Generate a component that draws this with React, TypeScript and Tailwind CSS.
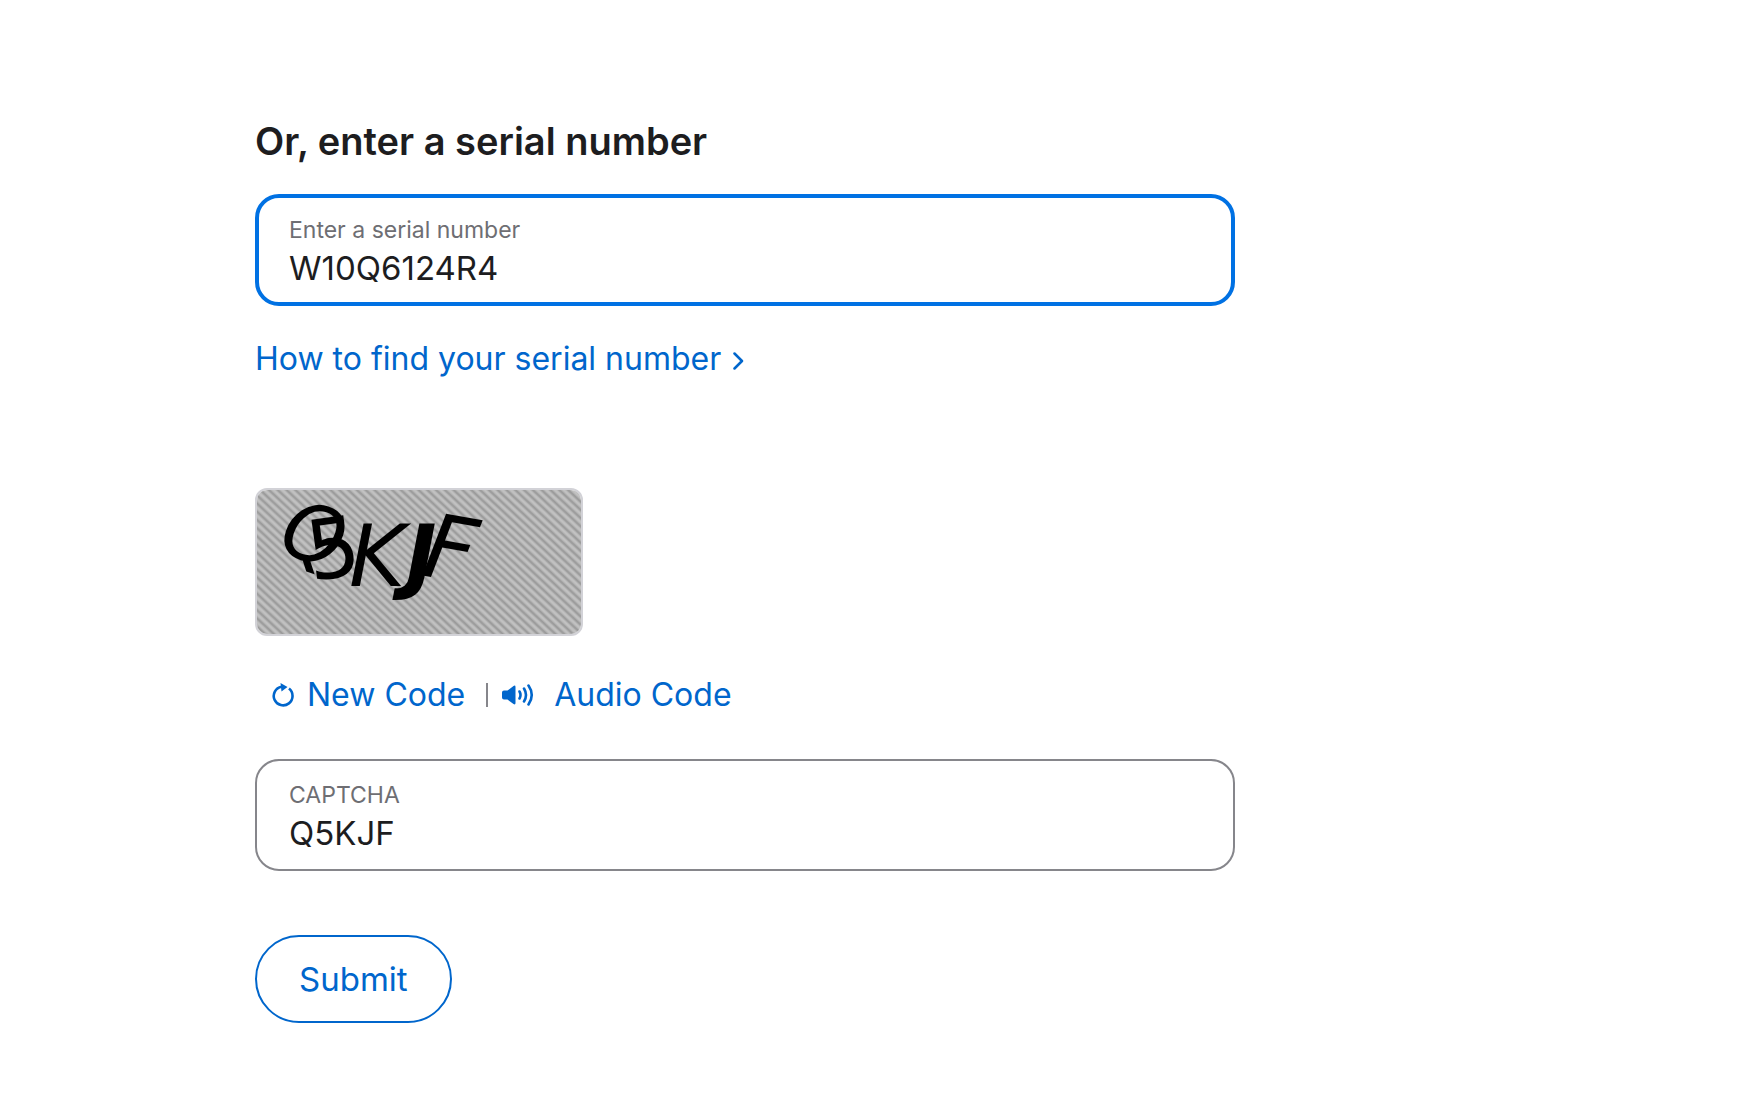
import React from "react";

function Field({ id, label, value, focused }: { id: string; label: string; value: string; focused?: boolean }) {
  return (
    <div
      className={
        focused
          ? "h-28 rounded-3xl border-4 border-[#0071e3] px-[30px] pt-4"
          : "h-28 rounded-3xl border-2 border-[#86868b] px-8 pt-[18px]"
      }
    >
      <label htmlFor={id} className="block text-[23px] leading-8 text-[#6e6e73]">
        {label}
      </label>
      <input
        id={id}
        type="text"
        defaultValue={value}
        className="block w-full bg-transparent text-[33px] leading-[44px] text-[#1d1d1f] outline-none"
      />
    </div>
  );
}

function CaptchaImage() {
  return (
    <svg viewBox="0 0 324 144" className="block h-full w-full" role="img" aria-label="Captcha code">
      <defs>
        <linearGradient id="stripe" x1="0" y1="0" x2="0" y2="1">
          <stop offset="0" stopColor="#c4c4c4" />
          <stop offset="0.3" stopColor="#bebebe" />
          <stop offset="0.65" stopColor="#929292" />
          <stop offset="1" stopColor="#c4c4c4" />
        </linearGradient>
        <pattern id="stripes" width="8" height="6" patternUnits="userSpaceOnUse" patternTransform="rotate(43)">
          <rect width="8" height="6" fill="url(#stripe)" />
        </pattern>
      </defs>
      <rect width="324" height="144" fill="url(#stripes)" />
      <g fontFamily="'DejaVu Sans', sans-serif" fill="#000">
        <text fontSize="79" fontStyle="italic" transform="translate(19 61) rotate(18)">Q</text>
        <text fontSize="83" transform="translate(54 91) rotate(-8)">5</text>
        <text fontSize="86" fontStyle="italic" transform="translate(92 96)">K</text>
        <text fontSize="82" fontWeight="700" fontStyle="italic" transform="translate(149 94)">J</text>
        <text fontSize="89" fontStyle="italic" transform="translate(163 85) rotate(10)">F</text>
      </g>
    </svg>
  );
}

function RefreshIcon() {
  return (
    <svg width="22" height="24" viewBox="0 0 22 24" fill="none" aria-hidden="true">
      <path d="M17 5.600A9.400 9.400 0 1 1 9.500 3.700" stroke="currentColor" strokeWidth="2.600" />
      <path d="M8.500 0 15.500 4 9.500 8.500Z" fill="currentColor" />
    </svg>
  );
}

function SpeakerIcon() {
  return (
    <svg width="32" height="24" viewBox="0 0 32 24" fill="none" aria-hidden="true">
      <path
        d="M2 7.500H5.500L11.500 3Q13.500 1.800 13.500 4V20Q13.500 22.200 11.500 21L5.500 16.500H2Q0 16.500 0 14.500V9.500Q0 7.500 2 7.500Z"
        fill="currentColor"
      />
      <path
        d="M17.500 8.500Q19.500 12 17.500 15.500M22 5.500Q26 12 22 18.500M26.500 2.500Q33 12 26.500 21.500"
        stroke="currentColor"
        strokeWidth="2.600"
        strokeLinecap="round"
      />
    </svg>
  );
}

export default function App() {
  return (
    <main
      className="min-h-screen bg-white px-[255px] pt-[116px] pb-[87px] text-[32px] leading-[50px] text-[#0066cc]"
      style={{ fontFamily: "Inter, sans-serif" }}
    >
      <form className="max-w-[980px]" onSubmit={(e) => e.preventDefault()}>
        <h2 className="mb-7 text-[38px] font-semibold text-[#1d1d1f]">Or, enter a serial number</h2>
        <Field id="serial" label="Enter a serial number" value="W10Q6124R4" focused />
        <a href="#help" className="mt-7 flex w-fit items-center gap-3">
          How to find your serial number
          <svg width="11" height="18" viewBox="0 0 11 18" fill="none" aria-hidden="true" className="mt-1">
            <path d="M1.500 1.500 9 9 1.500 16.500" stroke="currentColor" strokeWidth="2.500" strokeLinecap="round" strokeLinejoin="round" />
          </svg>
        </a>
        <div className="mt-26 h-[148px] w-[328px] overflow-hidden rounded-xl border-2 border-[#d2d2d7]">
          <CaptchaImage />
        </div>
        <div className="mt-[34px] flex items-center pl-[17px]">
          <button type="button" className="flex items-center gap-[13px]">
            <RefreshIcon />
            New Code
          </button>
          <span className="mr-3.5 ml-[21px] h-6 w-0.5 bg-[#86868b]" />
          <button type="button" className="flex items-center gap-5">
            <SpeakerIcon />
            Audio Code
          </button>
        </div>
        <div className="mt-[39px]">
          <Field id="captcha" label="CAPTCHA" value="Q5KJF" />
        </div>
        <button type="submit" className="mt-16 h-[88px] rounded-full border-2 border-[#0066cc] px-[42px] text-[33px]">
          Submit
        </button>
      </form>
    </main>
  );
}
